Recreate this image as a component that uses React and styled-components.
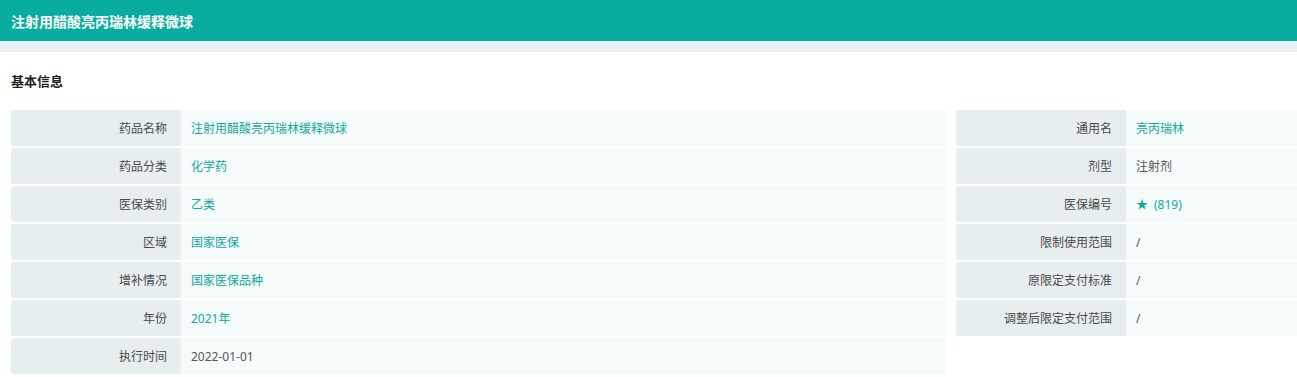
import React from "react";
import styled, { createGlobalStyle } from "styled-components";

const Global = createGlobalStyle`
  html, body { margin: 0; padding: 0; background: #fff; }
  body { font-family: "Noto Sans", "Noto Sans CJK SC", sans-serif; }
  * { box-sizing: border-box; }
`;

const Header = styled.header`
  height: 41px;
  background: #09ada0;
  display: flex;
  align-items: center;
  padding-left: 11px;
  color: #fff;
  font-size: 14px;
  font-weight: 700;
  font-family: "Noto Sans CJK SC", sans-serif;
`;

const Strip = styled.div`
  height: 11px;
  background: #ebf0f7;
`;

const Content = styled.main`
  padding: 18px 0 0 11px;
`;

const SectionTitle = styled.h2`
  margin: 0;
  height: 22px;
  line-height: 22px;
  font-size: 13px;
  font-weight: 700;
  color: #222;
  font-family: "Noto Sans CJK SC", sans-serif;
`;

const Grid = styled.div`
  margin-top: 18px;
  display: grid;
  grid-template-columns: 935px 1fr;
  column-gap: 10px;
`;

const Column = styled.div`
  display: flex;
  flex-direction: column;
  gap: 2px;
`;

const Row = styled.div`
  display: flex;
  height: 36px;
`;

const Label = styled.div`
  width: 170px;
  flex: none;
  background: #e6eef0;
  border-radius: 3px 0 0 3px;
  display: flex;
  align-items: center;
  justify-content: flex-end;
  padding-right: 14px;
  font-size: 12px;
  color: #4a4a4a;
`;

const Value = styled.div`
  flex: 1;
  background: #f5fbfb;
  display: flex;
  align-items: center;
  padding-left: 10px;
  font-size: 12px;
  color: ${(p) => (p.$accent ? "#13a89b" : "#555")};
`;

const Star = styled.span`
  margin-right: 6px;
`;

const left = [
  ["药品名称", "注射用醋酸亮丙瑞林缓释微球", true],
  ["药品分类", "化学药", true],
  ["医保类别", "乙类", true],
  ["区域", "国家医保", true],
  ["增补情况", "国家医保品种", true],
  ["年份", "2021年", true],
  ["执行时间", "2022-01-01", false],
];

const right = [
  ["通用名", "亮丙瑞林", true],
  ["剂型", "注射剂", false],
  ["医保编号", <><Star>★</Star>(819)</>, true],
  ["限制使用范围", "/", false],
  ["原限定支付标准", "/", false],
  ["调整后限定支付范围", "/", false],
];

const Field = ({ label, value, accent }) => (
  <Row>
    <Label>{label}</Label>
    <Value $accent={accent}>{value}</Value>
  </Row>
);

export default function App() {
  return (
    <>
      <Global />
      <Header>注射用醋酸亮丙瑞林缓释微球</Header>
      <Strip />
      <Content>
        <SectionTitle>基本信息</SectionTitle>
        <Grid>
          <Column>
            {left.map(([l, v, a]) => (
              <Field key={l} label={l} value={v} accent={a} />
            ))}
          </Column>
          <Column>
            {right.map(([l, v, a]) => (
              <Field key={l} label={l} value={v} accent={a} />
            ))}
          </Column>
        </Grid>
      </Content>
    </>
  );
}
